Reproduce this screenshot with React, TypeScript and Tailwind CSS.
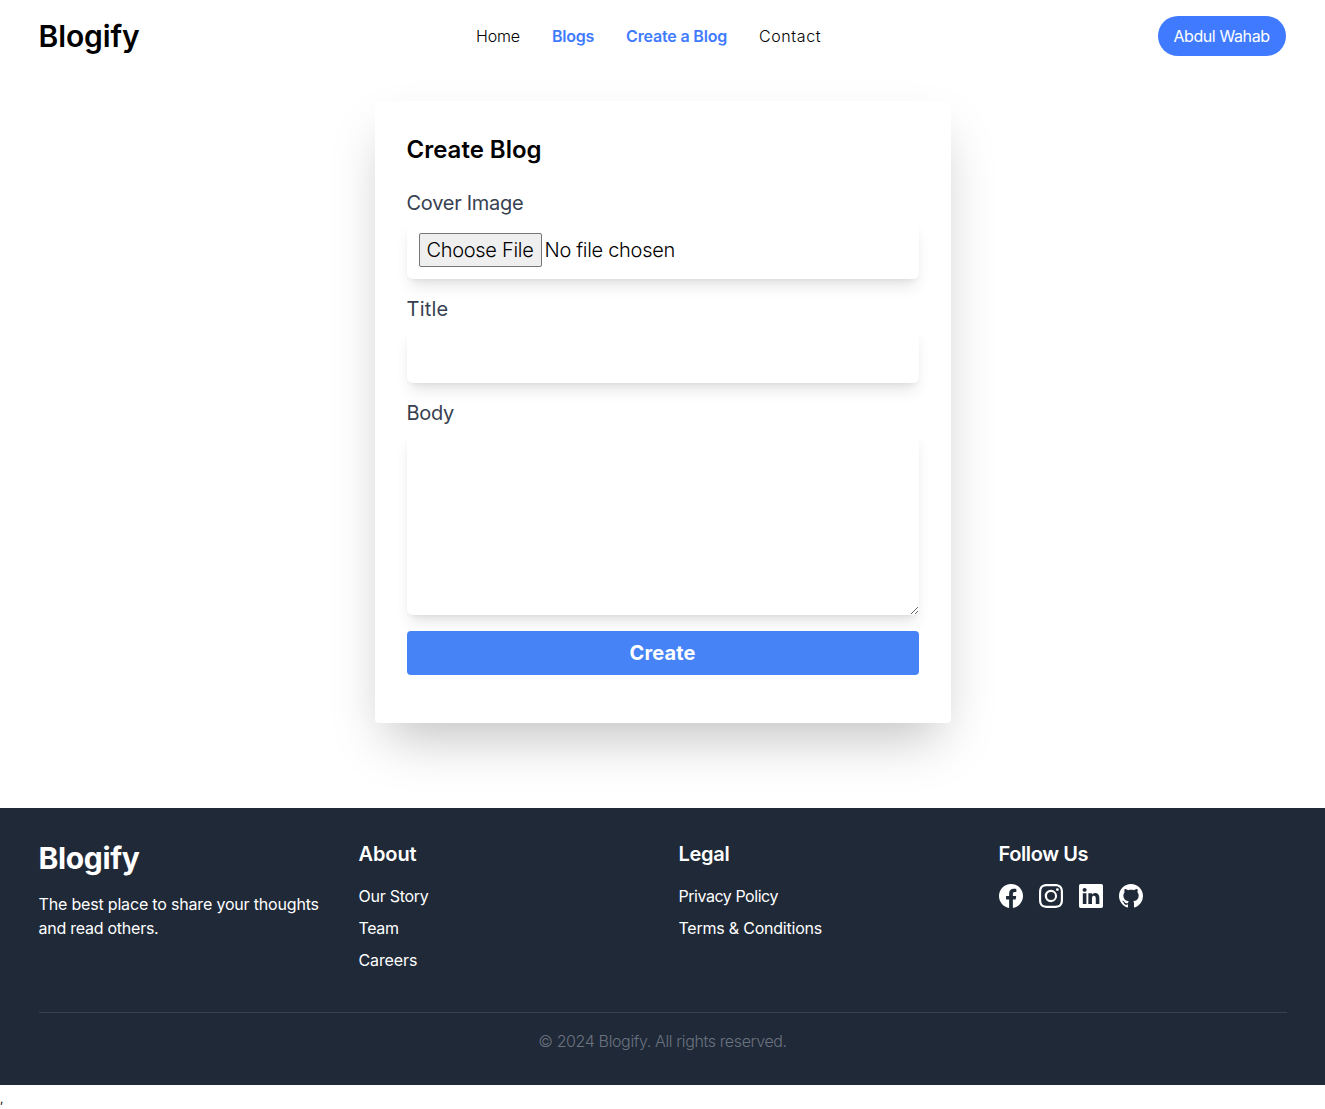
import type { ReactNode } from "react";
import { BsFacebook, BsGithub, BsInstagram, BsLinkedin } from "react-icons/bs";

function Header() {
  return (
    <header className="mx-auto flex w-full max-w-7xl items-center justify-between pr-[17px] pl-4 py-4">
      <a className="w-[100px] text-[30px] leading-10 font-semibold tracking-[-0.1px] whitespace-nowrap text-black">
        Blogify
      </a>
      <nav className="ml-px flex gap-8 text-base whitespace-nowrap text-black">
        <a className="w-11 font-light tracking-[-0.14px]">Home</a>
        <a className="w-[42px] font-semibold tracking-[-0.26px] text-[#407bff]">Blogs</a>
        <a className="w-[101px] font-semibold tracking-[-0.16px] text-[#407bff]">Create a Blog</a>
        <a className="w-[62px] font-light tracking-[0.6px]">Contact</a>
      </nav>
      <button className="h-10 w-32 rounded-full bg-[#407bff] text-center text-base tracking-[-0.4px] whitespace-nowrap text-white">
        Abdul Wahab
      </button>
    </header>
  );
}

function Field({ label, children }: { label: ReactNode; children: ReactNode }) {
  return (
    <div className="mb-4">
      <div className="mb-1 text-xl leading-7 text-[#374151]">{label}</div>
      {children}
    </div>
  );
}

function BlogForm() {
  return (
    <form className="mx-auto mt-[29px] h-[622px] w-[576px] rounded bg-white p-8 shadow-2xl">
      <h2 className="mb-[23px] pt-px text-2xl leading-8 font-semibold text-black">Create Blog</h2>
      <Field label={<span className="tracking-[-0.27px]">Cover Image</span>}>
        <div className="flex h-[58px] items-center gap-[3px] rounded-md bg-white p-3 text-xl font-light whitespace-nowrap text-black shadow-lg">
          <button
            type="button"
            className="h-[34px] w-[123px] rounded-[2px] border border-[#767676] bg-[#efefef] text-center leading-8 tracking-[-0.3px]"
          >
            Choose File
          </button>
          <span className="tracking-[-0.3px]">No file chosen</span>
        </div>
      </Field>
      <Field label={<span className="tracking-[0.24px]">Title</span>}>
        <input type="text" className="block h-14 w-full rounded-md bg-white p-3 text-xl shadow-lg outline-none" />
      </Field>
      <Field label={<span className="tracking-[-0.29px]">Body</span>}>
        <textarea className="block h-[184px] w-full rounded-md bg-white p-3 text-xl shadow-lg outline-none" />
      </Field>
      <button
        type="button"
        className="block h-11 w-full rounded bg-[#4583f6] text-xl font-bold tracking-[0.13px] text-white"
      >
        Create
      </button>
    </form>
  );
}

function FooterHeading({ children }: { children: ReactNode }) {
  return <h3 className="mb-4 text-xl leading-7 font-semibold whitespace-nowrap">{children}</h3>;
}

function Footer() {
  return (
    <footer className="mt-[85px] h-[277px] bg-[#1f2937] pt-8 text-white">
      <div className="mx-auto max-w-7xl px-4">
        <div className="grid h-[172px] grid-cols-4 gap-8 whitespace-nowrap">
          <div>
            <h2 className="mb-4 text-[30px] leading-9 font-bold tracking-[-0.35px]">Blogify</h2>
            <p>
              <span className="tracking-[-0.18px]">The best place to share your thoughts</span>
              <br />
              <span className="tracking-[-0.25px]">and read others.</span>
            </p>
          </div>
          <div>
            <FooterHeading>
              <span className="tracking-[-0.1px]">About</span>
            </FooterHeading>
            <ul className="space-y-2">
              <li className="tracking-[-0.27px]">Our Story</li>
              <li className="tracking-[-0.39px]">Team</li>
              <li className="tracking-[-0.12px]">Careers</li>
            </ul>
          </div>
          <div>
            <FooterHeading>
              <span className="tracking-[-0.28px]">Legal</span>
            </FooterHeading>
            <ul className="space-y-2">
              <li className="tracking-[-0.46px]">Privacy Policy</li>
              <li className="tracking-[-0.22px]">Terms &amp; Conditions</li>
            </ul>
          </div>
          <div>
            <FooterHeading>
              <span className="tracking-[-0.4px]">Follow Us</span>
            </FooterHeading>
            <div className="flex gap-4">
              <BsFacebook size={24} />
              <BsInstagram size={24} />
              <BsLinkedin size={24} />
              <BsGithub size={24} />
            </div>
          </div>
        </div>
        <div className="border-t border-[#374151] pt-4 text-center font-light tracking-[-0.37px] text-[#6b7280]">
          © 2024 Blogify. All rights reserved.
        </div>
      </div>
    </footer>
  );
}

export default function App() {
  return (
    <div className="min-h-[1109px] overflow-hidden bg-white font-['Inter',sans-serif] text-base">
      <Header />
      <BlogForm />
      <Footer />
      <div className="h-6 text-xs leading-7 font-normal text-black">,</div>
    </div>
  );
}
